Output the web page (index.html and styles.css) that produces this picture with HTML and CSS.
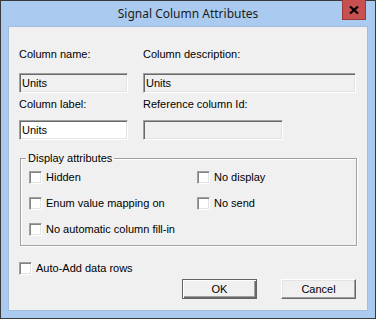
FILE: index.html
```html
<!DOCTYPE html>
<html lang="en">
<head>
  <meta charset="UTF-8" />
  <title>Signal Column Attributes</title>
  <link rel="stylesheet" href="styles.css">
</head>
<body>

<div class="window">
  <div class="titlebar">
    <span></span>
    <span class="title">Signal Column Attributes</span>
    <button class="close-btn" title="Close">
      <svg width="10" height="8" viewBox="0 0 10 8">
        <path d="M1 0.5 L9 7.5 M9 0.5 L1 7.5" stroke="#000" stroke-width="2.2" fill="none" />
      </svg>
    </button>
  </div>

  <div class="client">
    <div class="fields">
      <div class="caption">Column name:</div>
      <div class="caption">Column description:</div>
      <input class="edit" type="text" value="Units" disabled />
      <input class="edit" type="text" value="Units" disabled />
      <div class="caption second">Column label:</div>
      <div class="caption second">Reference column Id:</div>
      <input class="edit white" type="text" value="Units" />
      <input class="edit short" type="text" value="" disabled />
    </div>

    <fieldset class="group">
      <legend>Display attributes</legend>
      <div class="checks">
        <label class="check-row"><span class="check"></span>Hidden</label>
        <label class="check-row"><span class="check"></span>No display</label>
        <label class="check-row"><span class="check"></span>Enum value mapping on</label>
        <label class="check-row"><span class="check"></span>No send</label>
        <label class="check-row"><span class="check"></span>No automatic column fill-in</label>
      </div>
    </fieldset>

    <label class="check-row auto-add"><span class="check"></span>Auto-Add data rows</label>

    <div class="buttons">
      <button class="btn default">OK</button>
      <button class="btn">Cancel</button>
    </div>
  </div>
</div>

</body>
</html>
```

FILE: styles.css
```css
body {
  margin: 0;
  padding: 0;
  font-family: 'Liberation Sans', Arial, sans-serif;
  font-size: 11px;
  color: #000;
  background: #fff;
}

.window {
  width: 376px;
  height: 319px;
  box-sizing: border-box;
  border: 1px solid #3a3a3a;
  background: #aacbef;
  display: flex;
  flex-direction: column;
}

.titlebar {
  height: 25px;
  display: grid;
  grid-template-columns: 1fr auto 1fr;
  align-items: start;
}

.title {
  font-family: 'Noto Sans', 'Open Sans', sans-serif;
  font-size: 12px;
  line-height: 25px;
  color: #1b1b1b;
}

.close-btn {
  justify-self: end;
  margin-top: -1px;
  margin-right: 9px;
  width: 24px;
  height: 20px;
  padding: 0;
  border: 1px solid #9c3a3a;
  border-top: none;
  background: #c75050;
  display: flex;
  align-items: center;
  justify-content: center;
  cursor: pointer;
}

.client {
  flex: 1;
  margin: 0 7px 7px 7px;
  border: 1px solid #a2bcdb;
  background: #f0f0f0;
  padding: 21px 0 0 10px;
}

.fields {
  display: grid;
  grid-template-columns: 109px 213px;
  column-gap: 15px;
  width: 337px;
}

.caption {
  line-height: 13px;
  margin-bottom: 12px;
}

.caption.second {
  margin-top: 5px;
  margin-bottom: 9px;
}

.edit {
  box-sizing: border-box;
  height: 20px;
  margin: 0;
  padding: 0 2px;
  font-family: inherit;
  font-size: 11px;
  color: #000;
  background: #f0f0f0;
  border: 1px solid;
  border-color: #a0a0a0 #fff #fff #a0a0a0;
  box-shadow: inset 1px 1px #696969, inset -1px -1px #e3e3e3;
  outline: none;
}

.edit.white {
  background: #fff;
}

.edit.short {
  width: 140px;
}

.group {
  width: 337px;
  box-sizing: border-box;
  margin: 12px 0 0 1px;
  padding: 6px 8px 9px 8px;
  border: 1px solid #a0a0a0;
  box-shadow: inset 1px 1px #fff, 1px 1px #fff;
}

.group legend {
  margin-left: -3px;
  padding: 0 2px;
  line-height: 13px;
}

.checks {
  display: grid;
  grid-template-columns: 168px auto;
  row-gap: 13px;
}

.check-row {
  display: flex;
  align-items: center;
  gap: 4px;
  height: 13px;
  line-height: 13px;
}

.check {
  box-sizing: border-box;
  width: 13px;
  height: 13px;
  background: #fff;
  border: 1px solid;
  border-color: #a0a0a0 #fff #fff #a0a0a0;
  box-shadow: inset 1px 1px #838383, inset -1px -1px #e3e3e3;
}

.auto-add {
  margin-top: 16px;
}

.buttons {
  width: 337px;
  display: flex;
  justify-content: flex-end;
  gap: 24px;
  margin-top: 4px;
}

.btn {
  box-sizing: border-box;
  width: 75px;
  height: 20px;
  padding: 0;
  font-family: inherit;
  font-size: 11px;
  color: #000;
  background: #f0f0f0;
  border: 1px solid;
  border-color: #fff #696969 #696969 #fff;
  box-shadow: inset -1px -1px #a0a0a0, inset 1px 1px #e3e3e3;
  cursor: pointer;
}

.btn.default {
  border: 1px solid #646464;
  box-shadow: inset 1px 1px #fff, inset -1px -1px #696969, inset -2px -2px #a0a0a0;
}
```
